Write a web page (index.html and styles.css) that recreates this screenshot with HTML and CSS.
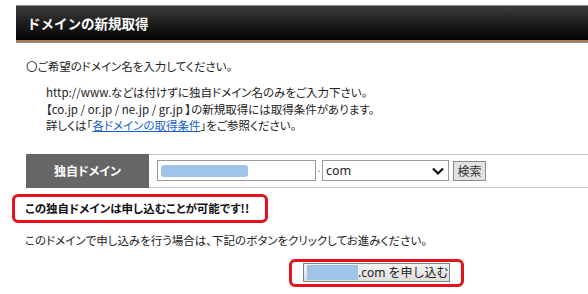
FILE: index.html
```html
<!DOCTYPE html>
<html lang="ja">
<head>
<meta charset="utf-8">
<title>ドメインの新規取得</title>
<link rel="stylesheet" href="styles.css">
</head>
<body>
<div class="page">
  <h1 class="title">ドメインの新規取得</h1>
  <div class="content">
    <p class="lead">〇ご希望のドメイン名を入力してください。</p>
    <div class="notes">
      <p>http://www.などは付けずに独自ドメイン名のみをご入力下さい。</p>
      <p>【co.jp / or.jp / ne.jp / gr.jp 】の新規取得には取得条件があります。</p>
      <p>詳しくは「<a href="#" class="link">各ドメインの取得条件</a>」をご参照ください。</p>
    </div>
  </div>
  <div class="form-row">
    <div class="label">独自ドメイン</div>
    <div class="field">
      <div class="input"><span class="mask mask-input"></span></div>
      <span class="dot">.</span>
      <div class="select-wrap">
        <select class="select"><option>com</option></select>
        <svg class="chev" width="12" height="9" viewBox="0 0 12 9"><path d="M1 1.5 L6 6.5 L11 1.5" fill="none" stroke="#111" stroke-width="2.2"/></svg>
      </div>
      <button class="search">検索</button>
    </div>
  </div>
  <div class="result">この独自ドメインは申し込むことが可能です!!</div>
  <p class="guide">このドメインで申し込みを行う場合は、下記のボタンをクリックしてお進みください。</p>
  <div class="apply-wrap">
    <div class="apply-box">
      <button class="apply"><span class="mask mask-btn"></span>.com を申し込む</button>
    </div>
  </div>
</div>
</body>
</html>
```
FILE: styles.css
```css
html, body {
  margin: 0;
  padding: 0;
  overflow: hidden;
  background: #fff;
}
body {
  font-family: "Noto Sans CJK JP", "Noto Sans", sans-serif;
  font-size: 12px;
  color: #222;
  font-feature-settings: "palt";
}
p { margin: 0; }
.page {
  width: 720px;
  margin-left: 16px;
  padding-top: 5px;
}
.title {
  margin: 0;
  height: 34px;
  line-height: 34px;
  padding-left: 11px;
  font-size: 13.5px;
  font-weight: bold;
  color: #fff;
  font-feature-settings: normal;
  background: linear-gradient(#3d3d3d, #202020 45%, #040404);
  border-top: 1px solid #8a8a8a;
  border-bottom: 2px solid #a87c52;
  box-shadow: 0 1px 0 #8e8e8e;
}
.content {
  padding-left: 10px;
}
.lead {
  margin-top: 16px;
  line-height: 16px;
  font-size: 11.5px;
}
.notes {
  margin-top: 10px;
  padding-left: 20px;
  line-height: 16.5px;
  font-size: 11.5px;
}
.link {
  color: #1a5fc8;
  text-decoration: underline;
}
.form-row {
  margin-top: 20px;
  margin-left: 10px;
  display: flex;
  align-items: center;
  height: 32px;
  border-top: 1px solid #c8c8c8;
  border-bottom: 1px solid #c8c8c8;
}
.label {
  width: 123px;
  align-self: stretch;
  margin: -1px 0;
  background: #666;
  color: #fff;
  font-weight: bold;
  display: flex;
  align-items: center;
  justify-content: center;
}
.field {
  display: flex;
  align-items: center;
  padding-left: 8px;
}
.input {
  width: 151px;
  height: 19px;
  border: 1px solid #9a9a9a;
  background: #fff;
  padding: 0 3px;
  display: flex;
  align-items: center;
}
.mask {
  display: inline-block;
  background: #9ec4e9;
  border-radius: 3px;
}
.mask-input {
  width: 87px;
  height: 12px;
}
.dot {
  width: 6px;
  text-align: center;
  color: #888;
  font-size: 11px;
  line-height: 1;
  align-self: flex-end;
  padding-bottom: 8px;
}
.select-wrap {
  position: relative;
}
.select {
  appearance: none;
  -webkit-appearance: none;
  width: 127px;
  height: 21px;
  margin: 0;
  padding: 0 0 0 3px;
  border: 1px solid #9a9a9a;
  border-radius: 0;
  background: #fff;
  font-family: "Noto Sans", "Noto Sans CJK JP", sans-serif;
  font-size: 12.5px;
  color: #222;
}
.chev {
  position: absolute;
  right: 5px;
  top: 7px;
  pointer-events: none;
}
.search {
  margin-left: 4px;
  width: 33px;
  height: 20px;
  padding: 0;
  border: 1px solid #8c8c8c;
  background: #e2e2e2;
  font-family: inherit;
  font-size: 12px;
  color: #333;
}
.result {
  margin-top: 6px;
  margin-left: -4px;
  width: 240px;
  height: 23px;
  border: 3px solid #e4131b;
  border-radius: 6px;
  padding-left: 10px;
  display: flex;
  align-items: center;
  font-weight: bold;
  font-size: 11.5px;
  color: #111;
  white-space: nowrap;
}
.guide {
  margin-top: 9px;
  padding-left: 9px;
  line-height: 16px;
  font-size: 11.5px;
}
.apply-wrap {
  display: flex;
  justify-content: center;
  margin-top: 11px;
}
.apply-box {
  width: 147px;
  padding: 1px 11px 2px;
  border: 3px solid #e4131b;
  border-radius: 6px;
}
.apply {
  width: 147px;
  height: 19px;
  padding: 0 0 0 3px;
  border: 1px solid #7f7f7f;
  background: linear-gradient(#f3f3f3, #dedede);
  display: flex;
  align-items: center;
  font-family: "Noto Sans", "Noto Sans CJK JP", sans-serif;
  font-size: 12px;
  color: #222;
  white-space: nowrap;
}
.mask-btn {
  width: 55px;
  height: 15px;
  border-radius: 0;
}
```
